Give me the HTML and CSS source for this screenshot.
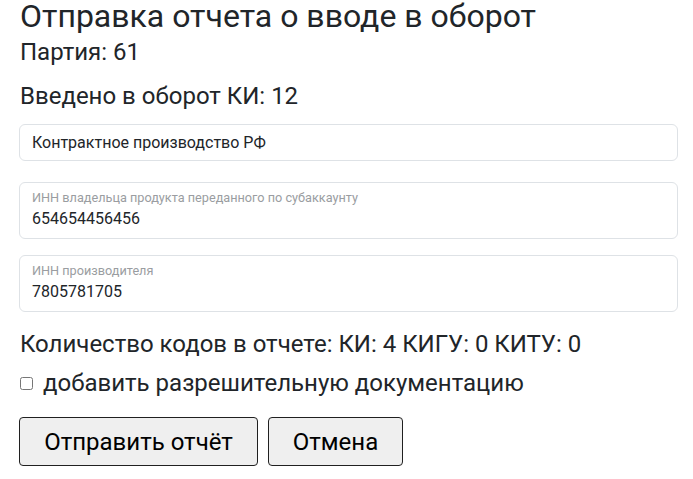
FILE: index.html
```html
<!DOCTYPE html>
<html lang="ru">
<head>
<meta charset="utf-8">
<link rel="stylesheet" href="styles.css">
</head>
<body>
<div class="page">
  <h1 class="title">Отправка отчета о вводе в оборот</h1>
  <p class="info info-first">Партия: 61</p>
  <p class="info info-second">Введено в оборот КИ: 12</p>

  <div class="field field-plain">Контрактное производство РФ</div>

  <div class="field field-labeled">
    <div class="field-label">ИНН владельца продукта переданного по субаккаунту</div>
    <div class="field-value">654654456456</div>
  </div>

  <div class="field field-labeled field-last">
    <div class="field-label">ИНН производителя</div>
    <div class="field-value">7805781705</div>
  </div>

  <p class="info counts">Количество кодов в отчете: КИ: 4 КИГУ: 0 КИТУ: 0</p>

  <label class="check">
    <input type="checkbox" class="check-box">
    <span>добавить разрешительную документацию</span>
  </label>

  <div class="actions">
    <button class="btn btn-send">Отправить отчёт</button>
    <button class="btn btn-cancel">Отмена</button>
  </div>
</div>
</body>
</html>
```

FILE: styles.css
```css
* { box-sizing: border-box; }

html, body {
  margin: 0;
  padding: 0;
  background: #ffffff;
}

body {
  font-family: Roboto, "Noto Sans", sans-serif;
  color: #212529;
}

.page {
  width: 693px;
  padding: 0 15px 0 19px;
  display: flex;
  flex-direction: column;
  align-items: flex-start;
}

.title {
  margin: 0 0 0 1px;
  font-size: 32px;
  line-height: 32px;
  font-weight: 400;
}

.info {
  margin: 0 0 0 1px;
  font-size: 24px;
  line-height: 28px;
}

.info-first {
  margin-top: 6px;
}

.info-second {
  margin-top: 16px;
}

.field {
  width: 659px;
  border: 1px solid #dee2e6;
  border-radius: 6px;
  background: #fff;
}

.field-plain {
  margin-top: 14px;
  height: 37px;
  padding: 0 12px;
  display: flex;
  align-items: center;
  font-size: 16px;
}

.field-labeled {
  margin-top: 21px;
  height: 57px;
  padding: 7px 12px 0;
}

.field-last {
  margin-top: 16px;
}

.field-label {
  font-size: 12.7px;
  line-height: 15px;
  color: #9a9da1;
}

.field-value {
  font-size: 16px;
  line-height: 20px;
  margin-top: 4px;
}

.counts {
  margin-top: 18px;
}

.check {
  margin-top: 11px;
  display: flex;
  align-items: center;
  font-size: 24px;
  line-height: 28px;
}

.check-box {
  width: 13px;
  height: 13px;
  margin: 0 10px 0 1px;
}

.actions {
  margin-top: 20px;
  display: flex;
  gap: 10px;
}

.btn {
  font-family: Roboto, "Noto Sans", sans-serif;
  font-size: 24px;
  color: #000;
  height: 49px;
  background: #efefef;
  border: 1px solid #202020;
  border-radius: 4px;
  padding: 0;
}

.btn-send { width: 239px; }
.btn-cancel { width: 135px; }
```
